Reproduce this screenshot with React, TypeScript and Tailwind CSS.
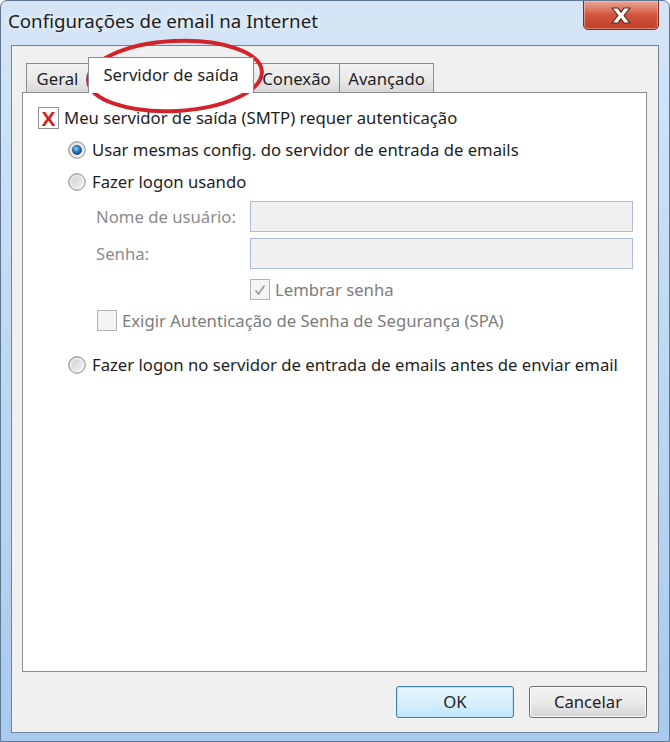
import React from "react";

function Radio({ checked }: { checked?: boolean }) {
  return (
    <svg width="18" height="18" viewBox="0 0 18 18" className="shrink-0">
      <defs>
        <linearGradient id="rg" x1="0" y1="0" x2="1" y2="1">
          <stop offset="0" stopColor="#c9caca" />
          <stop offset="1" stopColor="#f6f6f6" />
        </linearGradient>
        <radialGradient id="rdot" cx="0.4" cy="0.35" r="0.7">
          <stop offset="0" stopColor="#8fd0f7" />
          <stop offset="0.5" stopColor="#2b7fc8" />
          <stop offset="1" stopColor="#0f3f73" />
        </radialGradient>
      </defs>
      <circle cx="9" cy="9" r="8.3" fill="url(#rg)" stroke="#8d8f90" strokeWidth="1" />
      <circle cx="9" cy="9" r="6.3" fill="none" stroke="#f4f4f4" strokeWidth="1" />
      {checked && <circle cx="9" cy="9" r="4.6" fill="url(#rdot)" stroke="#1b4f86" strokeWidth="0.7" />}
    </svg>
  );
}

function Tab({ label, selected, w }: { label: string; selected?: boolean; w: string }) {
  if (selected) {
    return (
      <div
        className={`relative z-10 -ml-px -mb-px h-[36px] ${w} border border-b-0 border-[#898c95] bg-white flex items-start justify-center pt-[4px] text-[16.7px] text-[#1e1e1e]`}
      >
        {label}
      </div>
    );
  }
  return (
    <div
      className={`-ml-px h-[29px] ${w} border border-b-0 border-[#898c95] bg-gradient-to-b from-[#f2f2f2] via-[#ebebeb] to-[#d8d8d8] flex items-center justify-center pt-[2px] text-[16.7px] text-[#1e1e1e]`}
    >
      {label}
    </div>
  );
}

export default function App() {
  return (
    <div className="relative w-[670px] h-[742px] overflow-hidden rounded-t-[7px] border border-[#5f7690] bg-gradient-to-b from-[#d5e5f6] via-[#bed8f1] to-[#a9caed] font-['Noto_Sans',sans-serif]">
      {/* Title bar */}
      <div className="flex h-[44px] items-start">
        <div className="pl-[7px] pt-[6px] text-[18.7px] text-[#1b1b1b] [text-shadow:0_0_8px_#ffffff]">
          Configurações de email na Internet
        </div>
        <div className="ml-auto mr-[10px] -mt-px h-[30px] w-[76px] rounded-b-[5px] border border-[#7e2a1e] bg-gradient-to-b from-[#e9a798] via-[#d2533d] to-[#c2402a] flex items-center justify-center shadow-[inset_0_0_0_1px_rgba(255,200,190,0.5)]">
          <svg width="24" height="19" viewBox="0 0 24 19">
            <path
              d="M3 2 L9 2 L12 6.2 L15 2 L21 2 L15 9.5 L21 17 L15 17 L12 12.8 L9 17 L3 17 L9 9.5 Z"
              fill="#ffffff"
              stroke="#5d2418"
              strokeWidth="1.2"
              strokeLinejoin="round"
            />
          </svg>
        </div>
      </div>

      {/* Client area */}
      <div className="mx-[10px] h-[688px] border border-[#72849b] bg-[#f0f0f0] pl-[10px] pr-[11px] pt-[11px] flex flex-col">
        {/* Tabs */}
        <div className="flex items-end h-[35px] pl-[5px]">
          <Tab label="Geral" w="w-[63px]" />
          <Tab label="Servidor de saída" selected w="w-[166px]" />
          <Tab label="Conexão" w="w-[87px]" />
          <Tab label="Avançado" w="w-[95px]" />
        </div>
        {/* Panel */}
        <div className="h-[580px] border border-[#898c95] bg-white text-[16.7px] text-[#1e1e1e] flex flex-col pl-[15px] pt-[14px]">
          <div className="flex items-center h-[22px]">
            <div className="w-[21px] h-[22px] border border-[#8f8f8f] bg-white flex items-center justify-center text-[#d81e1e] text-[21px] font-bold leading-none font-['Liberation_Sans',sans-serif]">
              X
            </div>
            <span className="ml-[5px]">Meu servidor de saída (SMTP) requer autenticação</span>
          </div>
          <div className="flex items-center h-[24px] mt-[9px] pl-[30px]">
            <Radio checked />
            <span className="ml-[6px]">Usar mesmas config. do servidor de entrada de emails</span>
          </div>
          <div className="flex items-center h-[24px] mt-[8px] pl-[30px]">
            <Radio />
            <span className="ml-[6px]">Fazer logon usando</span>
          </div>
          <div className="flex items-center h-[31px] mt-[7px] pl-[58px]">
            <span className="w-[154px] text-[#8c8c8c]">Nome de usuário:</span>
            <div className="w-[383px] h-[31px] border border-[#abbcd3] bg-[#f0f0f0]" />
          </div>
          <div className="flex items-center h-[31px] mt-[6px] pl-[58px]">
            <span className="w-[154px] text-[#8c8c8c]">Senha:</span>
            <div className="w-[383px] h-[31px] border border-[#abbcd3] bg-[#f0f0f0]" />
          </div>
          <div className="flex items-center h-[21px] mt-[10px] pl-[212px]">
            <div className="w-[20px] h-[21px] border border-[#b2b2b2] bg-[#f4f4f4] flex items-center justify-center">
              <svg width="14" height="14" viewBox="0 0 14 14">
                <path d="M2.5 7.5 L5.5 11 L11.5 2.5" fill="none" stroke="#9a9a9a" strokeWidth="1.6" />
              </svg>
            </div>
            <span className="ml-[5px] text-[#7c7c7c]">Lembrar senha</span>
          </div>
          <div className="flex items-center h-[21px] mt-[10px] pl-[59px]">
            <div className="w-[20px] h-[21px] border border-[#b2b2b2] bg-[#f4f4f4]" />
            <span className="ml-[5px] text-[#7c7c7c]">Exigir Autenticação de Senha de Segurança (SPA)</span>
          </div>
          <div className="flex items-center h-[24px] mt-[22px] pl-[30px]">
            <Radio />
            <span className="ml-[6px]">Fazer logon no servidor de entrada de emails antes de enviar email</span>
          </div>
        </div>
        {/* Buttons */}
        <div className="flex justify-end gap-[15px] mt-[14px] text-[16.7px] text-[#1e1e1e]">
          <div className="w-[118px] h-[32px] rounded-[3px] border border-[#3c7fb1] bg-gradient-to-b from-[#eaf6fd] via-[#d9f0fc] to-[#bee6fd] shadow-[inset_0_0_0_1px_#bfe4f8] flex items-center justify-center">
            OK
          </div>
          <div className="w-[118px] h-[32px] rounded-[3px] border border-[#707070] bg-gradient-to-b from-[#f2f2f2] via-[#ebebeb] to-[#d5d5d5] shadow-[inset_0_0_0_1px_#fbfbfb] flex items-center justify-center">
            Cancelar
          </div>
        </div>
      </div>

      {/* Red annotation ellipse */}
      <svg
        className="absolute left-[80px] top-[36px] pointer-events-none"
        width="190"
        height="80"
        viewBox="0 0 190 80"
      >
        <ellipse
          cx="94"
          cy="39"
          rx="87"
          ry="35"
          fill="none"
          stroke="#d2232a"
          strokeWidth="4"
          transform="rotate(-3 94 39)"
        />
      </svg>
    </div>
  );
}
